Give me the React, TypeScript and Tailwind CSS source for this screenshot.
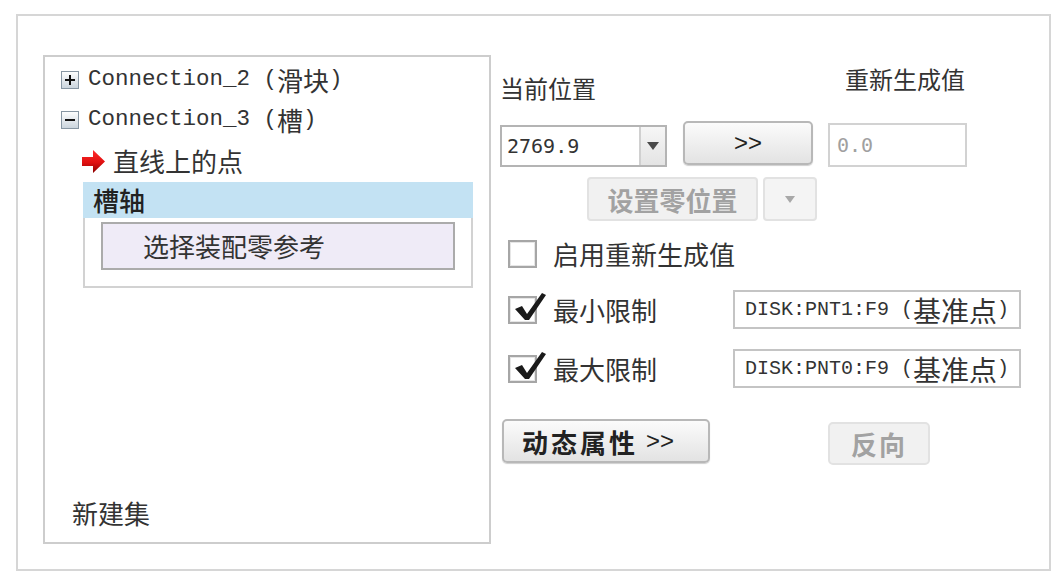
import React from "react"

const cjk = "font-['Noto_Sans_CJK_SC',sans-serif]"
const mono = "font-['Liberation_Mono','Noto_Sans_CJK_SC',monospace]"
const dmono = "font-['DejaVu_Sans_Mono',monospace]"

function TreeToggle({ open }: { open: boolean }) {
  const id = open ? "tgo" : "tgc"
  return (
    <svg width="18" height="18" viewBox="0 0 18 18" className="shrink-0">
      <defs>
        <linearGradient id={id} x1="0" y1="0" x2="0" y2="1">
          <stop offset="0" stopColor="#ffffff" />
          <stop offset="1" stopColor="#c9d3dc" />
        </linearGradient>
      </defs>
      <rect x="0.5" y="0.5" width="17" height="17" fill={`url(#${id})`} stroke="#8796a3" />
      <rect x="4" y="8" width="10" height="2" fill="#111" />
      {!open && <rect x="8" y="4" width="2" height="10" fill="#111" />}
    </svg>
  )
}

function RedArrow() {
  return (
    <svg width="24" height="23" viewBox="0 0 24 23" className="shrink-0">
      <defs>
        <linearGradient id="ra" x1="0" y1="0" x2="0" y2="1">
          <stop offset="0" stopColor="#ff2a2a" />
          <stop offset="0.55" stopColor="#e01010" />
          <stop offset="1" stopColor="#8a0000" />
        </linearGradient>
      </defs>
      <polygon points="0,7 11,7 11,0 23,11.5 11,23 11,16 0,16" fill="url(#ra)" />
    </svg>
  )
}

function Checkbox({ checked }: { checked: boolean }) {
  return (
    <div className="relative w-[29px] h-[28px] shrink-0 border-2 border-[#a6a6a6] bg-white shadow-[inset_0_0_0_1px_#e6e6e6]">
      {checked && (
        <svg width="36" height="34" viewBox="0 0 36 34" className="absolute left-[2px] top-[-8px] overflow-visible">
          <path d="M3 19 L10 16 L15 24 L30 3 L34 5 L17 30 L13 30 Z" fill="#1a1a1a" />
        </svg>
      )}
    </div>
  )
}

function Field({ code }: { code: string }) {
  return (
    <div className="flex items-center w-[288px] h-[39px] border-2 border-[#c4c4c4] bg-white pl-[10px] text-[#333] whitespace-nowrap">
      <span className={`${mono} text-[20px]`}>{code} (</span>
      <span className={`${cjk} text-[28px] leading-[34px]`}>基准点</span>
      <span className={`${mono} text-[20px]`}>)</span>
    </div>
  )
}

export default function App() {
  return (
    <div className="w-[1064px] h-[586px] bg-white overflow-hidden">
      <div className="ml-[16px] mt-[14px] w-[1035px] h-[557px] border-2 border-[#d6d6d6] flex pt-[39px] pl-[25px]">
        {/* tree panel */}
        <div className="w-[448px] h-[489px] border-2 border-[#cdcdcd] flex flex-col">
          <div className="pt-[3px]">
            <div className="h-[40px] flex items-center pl-[16px] text-[#333] whitespace-nowrap">
              <TreeToggle open={false} />
              <span className={`ml-[9px] ${mono} text-[22.5px]`}>Connection_2 (</span>
              <span className={`${cjk} text-[26px] leading-[32px]`}>滑块</span>
              <span className={`${mono} text-[22.5px]`}>)</span>
            </div>
            <div className="h-[40px] flex items-center pl-[16px] text-[#333] whitespace-nowrap">
              <TreeToggle open={true} />
              <span className={`ml-[9px] ${mono} text-[22.5px]`}>Connection_3 (</span>
              <span className={`${cjk} text-[26px] leading-[32px]`}>槽</span>
              <span className={`${mono} text-[22.5px]`}>)</span>
            </div>
            <div className="h-[42px] flex items-center pl-[37px] text-[#333]">
              <RedArrow />
              <span className={`ml-[7px] ${cjk} text-[26px] leading-[32px]`}>直线上的点</span>
            </div>
            <div className="ml-[38px] w-[390px] h-[36px] bg-[#c3e2f3] flex items-center pl-[10px]">
              <span className={`${cjk} text-[26px] leading-[32px] font-medium text-[#222]`}>槽轴</span>
            </div>
            <div className="ml-[38px] w-[390px] h-[70px] border-2 border-t-0 border-[#d2d2d2] pt-[4px] pl-[16px]">
              <div className="w-[354px] h-[48px] border-2 border-[#ababab] bg-[#efebf7] flex items-center pl-[40px]">
                <span className={`${cjk} text-[26px] leading-[32px] text-[#333]`}>选择装配零参考</span>
              </div>
            </div>
          </div>
          <div className="flex-1" />
          <div className={`pl-[27px] pb-[14px] ${cjk} text-[26px] leading-[30px] text-[#333]`}>新建集</div>
        </div>

        {/* settings */}
        <div className="ml-[9px] flex flex-col text-[#333]">
          <div className="w-[467px] h-[66px] flex justify-between items-start">
            <span className={`mt-[18px] ${cjk} text-[24px] leading-[30px]`}>当前位置</span>
            <span className={`mt-[9px] mr-[2px] ${cjk} text-[24px] leading-[30px]`}>重新生成值</span>
          </div>

          <div className="h-[46px] flex items-start">
            <div className="mt-[4px] w-[167px] h-[42px] border-2 border-[#b4b4b4] bg-white flex">
              <div className={`flex-1 flex items-center pl-[5px] ${dmono} text-[20px] text-[#333]`}>2769.9</div>
              <div className="w-[26px] border-l-2 border-[#d0d0d0] bg-gradient-to-b from-[#f6f6f6] to-[#e4e4e4] flex items-center justify-center">
                <svg width="12" height="8" viewBox="0 0 12 8">
                  <polygon points="0,0 12,0 6,8" fill="#4a4a4a" />
                </svg>
              </div>
            </div>
            <button className="ml-[16px] w-[130px] h-[44px] rounded-[5px] border-2 border-[#b8b8b8] bg-gradient-to-b from-[#fbfbfb] to-[#e3e3e3] shadow-[0_1px_1px_#cfcfcf] flex items-center justify-center font-['Liberation_Sans',sans-serif] text-[24px] text-[#222]">
              &gt;&gt;
            </button>
            <div className={`ml-[15px] mt-[2px] w-[139px] h-[44px] border-2 border-[#d2d2d2] bg-white flex items-center pl-[7px] ${dmono} text-[20px] text-[#a0a0a0]`}>
              0.0
            </div>
          </div>

          <div className="mt-[10px] ml-[87px] flex gap-[5px] h-[44px]">
            <button className={`w-[171px] h-[44px] rounded-[4px] border-2 border-[#e2e2e2] bg-[#f1f1f1] flex items-center justify-center ${cjk} text-[26px] font-bold text-[#a2a2a2]`}>
              设置零位置
            </button>
            <button className="w-[54px] h-[44px] rounded-[4px] border-2 border-[#e2e2e2] bg-[#f4f4f4] flex items-center justify-center">
              <svg width="10" height="7" viewBox="0 0 10 7">
                <polygon points="0,0 10,0 5,7" fill="#a8a8a8" />
              </svg>
            </button>
          </div>

          <div className="mt-[19px] h-[28px] flex items-center">
            <div className="ml-[8px]"><Checkbox checked={false} /></div>
            <span className={`ml-[16px] ${cjk} text-[26px] leading-[30px]`}>启用重新生成值</span>
          </div>

          <div className="mt-[22px] h-[39px] flex items-center">
            <div className="ml-[8px]"><Checkbox checked={true} /></div>
            <span className={`ml-[16px] w-[180px] ${cjk} text-[26px] leading-[30px]`}>最小限制</span>
            <Field code="DISK:PNT1:F9" />
          </div>

          <div className="mt-[20px] h-[39px] flex items-center">
            <div className="ml-[8px]"><Checkbox checked={true} /></div>
            <span className={`ml-[16px] w-[180px] ${cjk} text-[26px] leading-[30px]`}>最大限制</span>
            <Field code="DISK:PNT0:F9" />
          </div>

          <div className="mt-[31px] flex items-start">
            <button className="ml-[2px] w-[208px] h-[44px] rounded-[5px] border-2 border-[#b8b8b8] bg-gradient-to-b from-[#fbfbfb] to-[#e3e3e3] shadow-[0_1px_1px_#cfcfcf] flex items-center pl-[18px] text-[#222]">
              <span className={`${cjk} text-[26px] font-bold tracking-[3px]`}>动态属性</span>
              <span className="ml-[8px] font-['Liberation_Sans',sans-serif] text-[24px]">&gt;&gt;</span>
            </button>
            <button className={`ml-[118px] mt-[3px] w-[102px] h-[43px] rounded-[5px] border-2 border-[#e2e2e2] bg-[#f1f1f1] flex items-center justify-center ${cjk} text-[26px] font-bold tracking-[2px] text-[#a2a2a2]`}>
              反向
            </button>
          </div>
        </div>
      </div>
    </div>
  )
}
